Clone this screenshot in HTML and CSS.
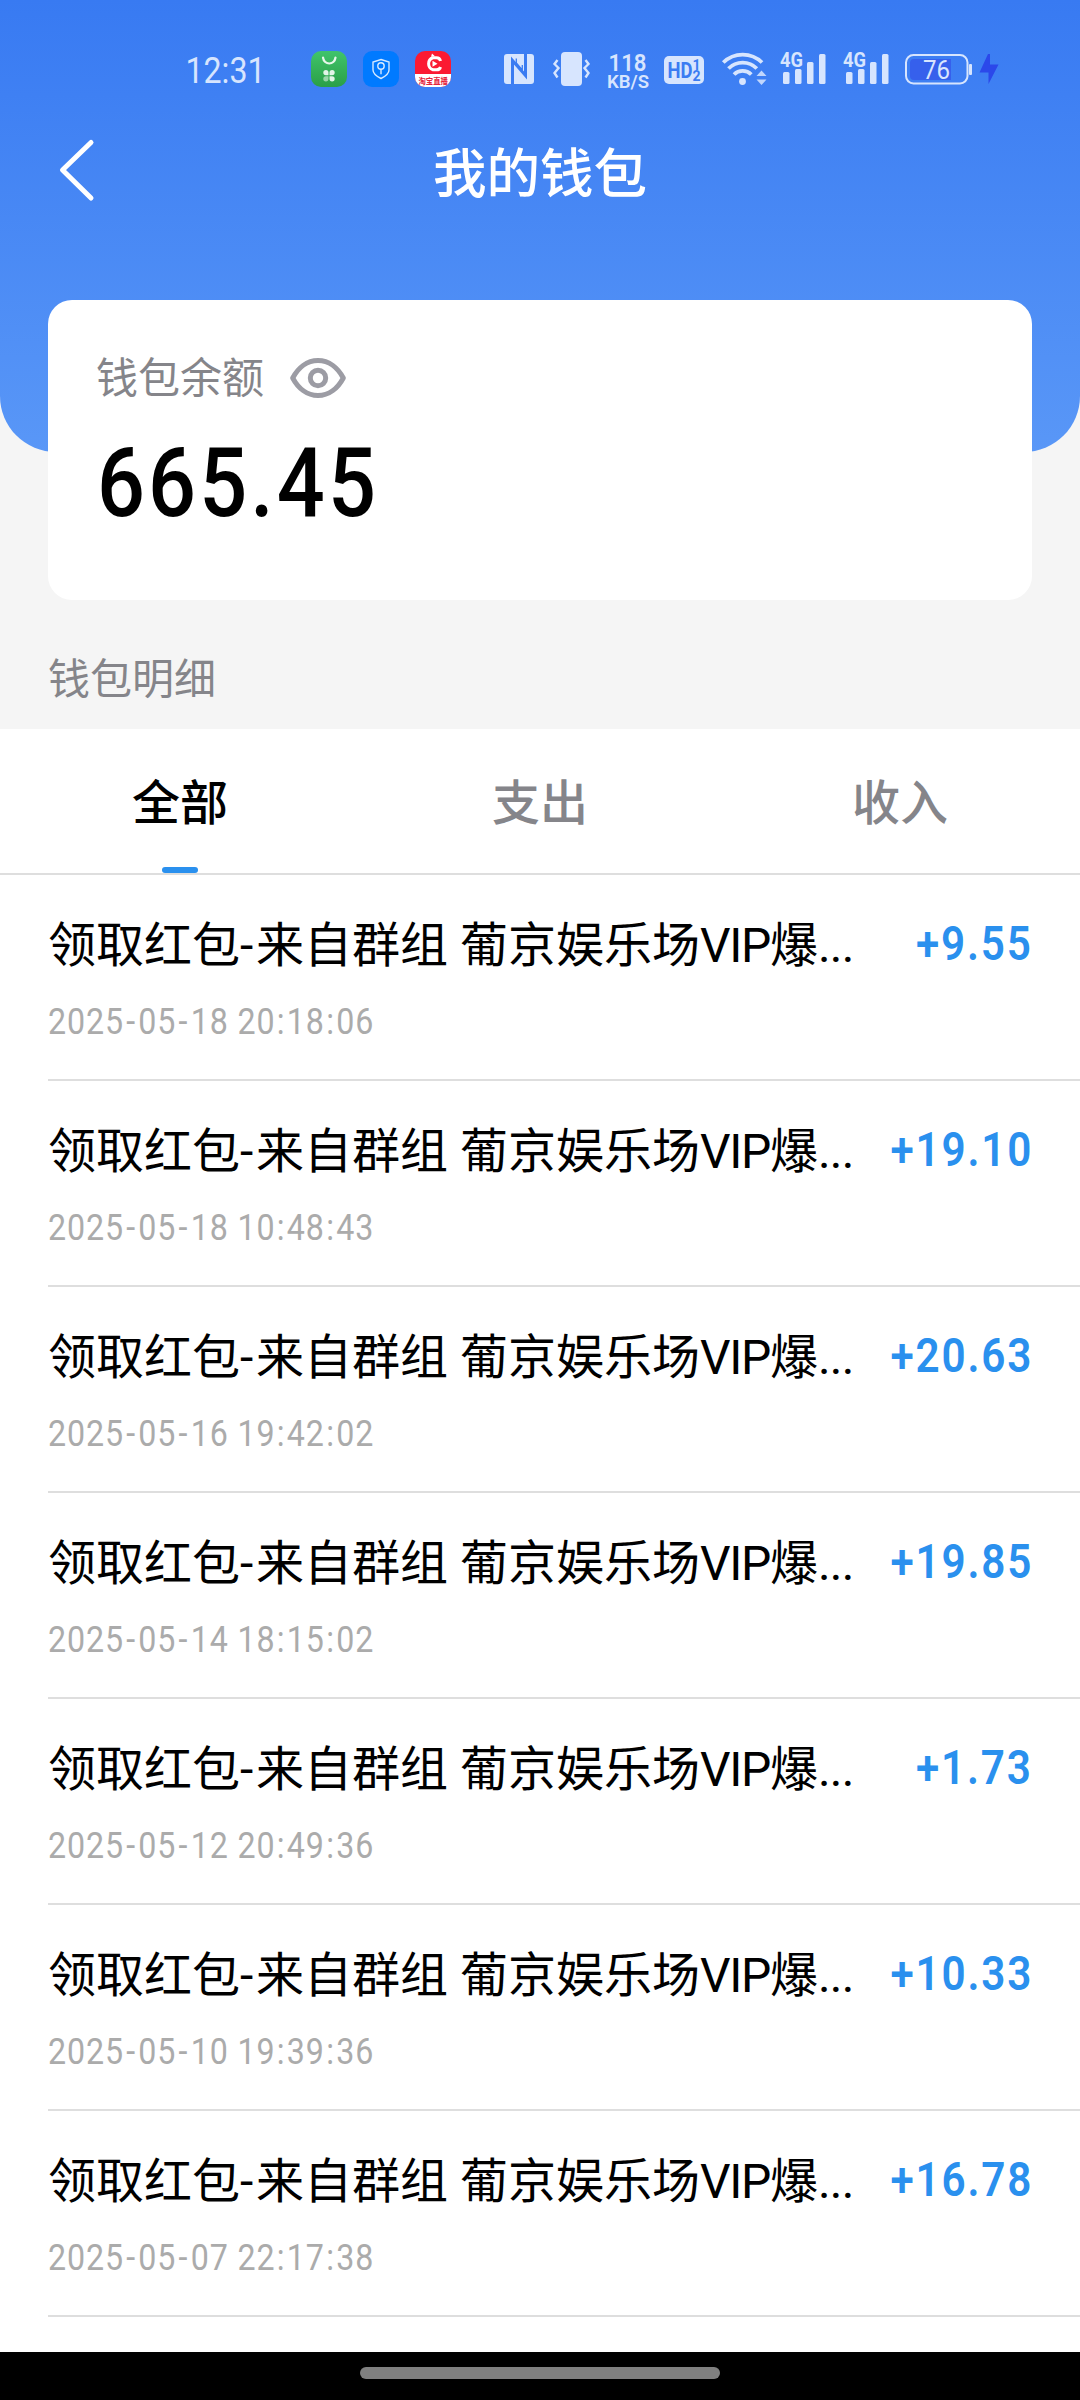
FILE: index.html
```html
<!DOCTYPE html>
<html lang="zh-CN">
<head>
<meta charset="utf-8">
<title>我的钱包</title>
<link rel="stylesheet" href="styles.css">
</head>
<body>
<div class="screen">
  <header class="hero">
    <div class="status">
      <svg class="time" width="84" height="80" viewBox="184 30 84 80"><text x="185.500" y="82.500" font-size="37" textLength="80" lengthAdjust="spacingAndGlyphs">12:31</text></svg>
      <svg class="apps" width="144" height="80" viewBox="309 30 144 80">
        <defs>
          <linearGradient id="store" x1="0" y1="0" x2="0" y2="1"><stop offset="0" stop-color="#40c46b"/><stop offset="1" stop-color="#2a9f47"/></linearGradient>
          <clipPath id="live"><rect x="415" y="51" width="36" height="36" rx="10"/></clipPath>
        </defs>
        <rect x="311" y="51" width="36" height="36" rx="10" fill="url(#store)"/>
        <path d="M323 57.500c1 8 11.500 8 12.500 0" fill="none" stroke="#e6f7ea" stroke-width="2.200" stroke-linecap="round"/>
        <g fill="#e2f5e7"><path d="M328.500 75.200h-2.600a2.600 2.600 0 1 1 2.600-2.600zM329.500 75.200h2.600a2.600 2.600 0 1 0-2.600-2.600zM329.500 76.200h2.600a2.600 2.600 0 1 1-2.600 2.600z"/><path opacity=".6" d="M328.500 76.200h-2.600a2.600 2.600 0 1 0 2.600 2.600z"/></g>
        <rect x="363" y="51" width="36" height="36" rx="9" fill="#007aff"/>
        <g fill="none" stroke="#d5e9ff" stroke-width="1.400"><path d="M381 59.500l8 2.500v8c0 4-4 6.500-8 8.500-4-2-8-4.500-8-8.500v-8z"/><circle cx="381" cy="66" r="3.200"/><path d="M381 69.200v5"/></g>
        <g clip-path="url(#live)">
          <rect x="415" y="51" width="36" height="36" fill="#fb1a32"/>
          <rect x="415" y="74" width="36" height="13" fill="#fff"/>
          <path d="M440.500 61c-.5-2-2-3.200-4-3.200h-3.500a6.300 6.300 0 0 0 0 12h3.500c2 0 3.500-1 4-2.800" fill="none" stroke="#fff" stroke-width="3"/>
          <path d="M432 53.500l3 2.800-4 .5zM432.500 60.800l5 3-5 3z" fill="#fff"/>
          <text class="cjk" x="418.500" y="84" font-size="8" fill="#e4223a" textLength="29.500" lengthAdjust="spacingAndGlyphs">淘宝直播</text>
        </g>
      </svg>
      <svg class="system" width="500" height="80" viewBox="502 30 500 80">
        <rect x="504" y="54" width="30" height="30" rx="3"/>
        <path d="M512.500 84V60.500l13 15V54" class="cut"/>
        <path d="M516.300 58.500v4.500l6 7v-5" fill="none" stroke="#3b7cf2" stroke-width="1.300"/>
        <rect x="561" y="52" width="21" height="34" rx="4"/>
        <path d="M557.500 60l-3 4 4 4-4 5 3 4.500M585.500 60l3 4-4 4 4 5-3 4.500" fill="none" stroke="#d7e5fe" stroke-width="2.400"/>
        <text x="608.500" y="70.500" font-size="24" font-weight="600" textLength="38" lengthAdjust="spacingAndGlyphs">118</text>
        <text x="607" y="87.500" font-size="18.500" font-weight="600" textLength="42" lengthAdjust="spacingAndGlyphs">KB/S</text>
        <rect x="664" y="56" width="40" height="28" rx="5"/>
        <g class="knock"><text x="667.500" y="77.500" font-size="22" textLength="25" lengthAdjust="spacingAndGlyphs">HD</text><text x="692.500" y="69.500" font-size="14">1</text><text x="692.500" y="81" font-size="14">2</text></g>
        <g fill="none" stroke="#d7e5fe" stroke-width="3.800"><path d="M723.300 62.500a27.500 27.500 0 0 1 38.700 0M728.500 68.500a19.800 19.800 0 0 1 28.300 0M734 74.500a12.200 12.200 0 0 1 17.300 0"/></g>
        <circle cx="742.500" cy="81.500" r="3.400"/>
        <path d="M756.500 76l5-5.500 5 5.500zM756.500 79.500l5 5.500 5-5.500z" opacity=".85"/>
        <g id="signal"><text x="780" y="67" font-size="20.500" font-weight="700" textLength="23" lengthAdjust="spacingAndGlyphs">4G</text>
        <rect x="783" y="72" width="6.500" height="12" rx="1.500"/><rect x="795" y="69" width="6.500" height="15" rx="1.500"/><rect x="807" y="62" width="6.500" height="22" rx="1.500"/><rect x="819" y="54" width="6.500" height="30" rx="1.500"/></g>
        <use href="#signal" x="63"/>
        <rect x="906" y="55" width="61.500" height="28.500" rx="7.500" fill="none" stroke="#d7e5fe" stroke-width="2"/>
        <path d="M951 59h-37a4 4 0 0 0-4 4v13a4 4 0 0 0 4 4h37z" fill="#3660ec"/>
        <text x="923" y="79" font-size="25" textLength="27" lengthAdjust="spacingAndGlyphs">76</text>
        <rect x="969" y="64" width="3" height="11" rx="1"/>
        <path d="M988 54l-8.500 18.500h9V84l10-19.500h-8.500V54z" fill="#2b48ea"/>
      </svg>
    </div>
    <nav class="navbar">
      <svg class="back" width="40" height="64" viewBox="0 0 40 64"><path d="M34 4.500L5.500 32 34 60" fill="none" stroke="#fff" stroke-width="5" stroke-linecap="round" stroke-linejoin="round"/></svg>
      <h1 class="title">我的钱包</h1>
    </nav>
  </header>
  <section class="card">
    <div class="card-label"><span>钱包余额</span>
      <svg width="56" height="42" viewBox="0 0 56 42" fill="none" stroke="#9c9ca4" stroke-width="5"><path d="M2.700 21C8 11 17 3.500 28 3.500S48 11 53.300 21C48 31 39 38.500 28 38.500S8 31 2.700 21z" stroke-linejoin="round"/><circle cx="28" cy="21" r="7.700"/></svg>
    </div>
    <div class="balance">665.45</div>
  </section>
  <h2 class="section-title">钱包明细</h2>
  <div class="tabs">
    <div class="tab active">全部</div>
    <div class="tab">支出</div>
    <div class="tab">收入</div>
  </div>
  <main class="list">
    <article class="row"><div class="line"><span class="desc">领取红包<i>-</i>来自群组 葡京娱乐场<b>VIP</b>爆<s>...</s></span><span class="amount">+9.55</span></div><time>2025<i>-</i>05<i>-</i>18 20<b>:</b>18<b>:</b>06</time></article>
    <article class="row"><div class="line"><span class="desc">领取红包<i>-</i>来自群组 葡京娱乐场<b>VIP</b>爆<s>...</s></span><span class="amount">+19.10</span></div><time>2025<i>-</i>05<i>-</i>18 10<b>:</b>48<b>:</b>43</time></article>
    <article class="row"><div class="line"><span class="desc">领取红包<i>-</i>来自群组 葡京娱乐场<b>VIP</b>爆<s>...</s></span><span class="amount">+20.63</span></div><time>2025<i>-</i>05<i>-</i>16 19<b>:</b>42<b>:</b>02</time></article>
    <article class="row"><div class="line"><span class="desc">领取红包<i>-</i>来自群组 葡京娱乐场<b>VIP</b>爆<s>...</s></span><span class="amount">+19.85</span></div><time>2025<i>-</i>05<i>-</i>14 18<b>:</b>15<b>:</b>02</time></article>
    <article class="row"><div class="line"><span class="desc">领取红包<i>-</i>来自群组 葡京娱乐场<b>VIP</b>爆<s>...</s></span><span class="amount">+1.73</span></div><time>2025<i>-</i>05<i>-</i>12 20<b>:</b>49<b>:</b>36</time></article>
    <article class="row"><div class="line"><span class="desc">领取红包<i>-</i>来自群组 葡京娱乐场<b>VIP</b>爆<s>...</s></span><span class="amount">+10.33</span></div><time>2025<i>-</i>05<i>-</i>10 19<b>:</b>39<b>:</b>36</time></article>
    <article class="row"><div class="line"><span class="desc">领取红包<i>-</i>来自群组 葡京娱乐场<b>VIP</b>爆<s>...</s></span><span class="amount">+16.78</span></div><time>2025<i>-</i>05<i>-</i>07 22<b>:</b>17<b>:</b>38</time></article>
  </main>
  <footer class="gesture"><div class="pill"></div></footer>
</div>
</body>
</html>
```
FILE: styles.css
```css
* { box-sizing: border-box; }
body {
  margin: 0;
  font-family: Roboto, "Noto Sans CJK SC", sans-serif;
  color: #000;
}
.screen {
  width: 1080px;
  height: 2400px;
  display: flex;
  flex-direction: column;
  background: #f5f5f5;
  overflow: hidden;
}
.hero {
  flex: none;
  height: 452px;
  border-radius: 0 0 56px 56px;
  background: linear-gradient(#387af2, #5997f7);
}
.status {
  display: flex;
  height: 110px;
  padding: 30px 0 0 184px;
  fill: #d7e5fe;
}
.status svg { flex: none; overflow: visible; }
.apps { margin-left: 41px; }
.system { margin-left: 49px; }
.cjk { font-family: "Noto Sans CJK SC", sans-serif; font-weight: 700; }
.cut { fill: none; stroke: #3b7cf2; stroke-width: 3; }
.knock { fill: #3b7cf2; font-weight: 700; }
.navbar {
  display: grid;
  grid-template-columns: 120px 1fr 120px;
  align-items: center;
  height: 120px;
}
.back { margin-left: 57px; }
.title {
  margin: 9px 0 0;
  text-align: center;
  color: #fff;
  font-size: 53.500px;
  font-weight: 500;
  line-height: 80px;
}
.card {
  flex: none;
  height: 300px;
  margin: -152px 48px 0;
  padding: 46px 48px 0;
  border-radius: 24px;
  background: #fff;
}
.card-label {
  display: flex;
  align-items: center;
  gap: 26px;
  height: 64px;
  font-size: 42px;
  line-height: 64px;
  color: #85858a;
}
.card-label span { padding-top: 2px; }
.balance {
  width: max-content;
  margin: 17px 0 0 1px;
  font-size: 96px;
  font-weight: 500;
  line-height: 112px;
  letter-spacing: 3.500px;
  transform: scaleX(.88);
  transform-origin: left;
}
.section-title {
  flex: none;
  height: 129px;
  margin: 0;
  padding: 48px 48px 0;
  font-size: 42px;
  font-weight: 400;
  line-height: 64px;
  color: #85858a;
}
.tabs {
  flex: none;
  display: grid;
  grid-template-columns: repeat(3, 1fr);
  height: 146px;
  border-bottom: 2px solid #dedede;
  background: #fff;
}
.tab {
  display: flex;
  flex-direction: column;
  align-items: center;
  justify-content: space-between;
  padding-top: 37px;
  font-size: 48px;
  font-weight: 500;
  line-height: 76px;
  color: #85858a;
}
.active { color: #000; }
.active::after {
  content: "";
  width: 36px;
  height: 6px;
  border-radius: 3px;
  background: #2a90ee;
}
.list { flex: 1; background: #fff; }
.row {
  height: 206px;
  margin-left: 48px;
  padding: 34px 48px 0 0;
  border-bottom: 2px solid #dedede;
}
.line {
  display: flex;
  justify-content: space-between;
  height: 70px;
  font-size: 48px;
  line-height: 73px;
  white-space: nowrap;
}
.desc i { font-style: normal; letter-spacing: 2.700px; }
.desc b { font-weight: 400; letter-spacing: -1.300px; }
.desc s { text-decoration: none; letter-spacing: -.800px; }
.amount {
  margin-right: -1px;
  font-weight: 600;
  line-height: 70px;
  color: #2a90ee;
  letter-spacing: 2.100px;
  transform: scaleX(.88);
  transform-origin: right;
}
.row time {
  display: block;
  width: max-content;
  margin-top: 18px;
  font-size: 37px;
  line-height: 50px;
  letter-spacing: 1px;
  color: #ababab;
  transform: scaleX(.87);
  transform-origin: left;
}
.row time i { margin: 0 2.700px; font-style: normal; }
.row time b { margin: 0 1.600px; font-weight: 400; }
.gesture {
  flex: none;
  height: 48px;
  padding-top: 15px;
  background: #000;
}
.pill {
  width: 360px;
  height: 12px;
  margin: 0 auto;
  border-radius: 6px;
  background: #808080;
}
```
